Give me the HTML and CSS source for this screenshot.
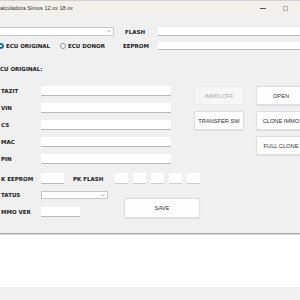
FILE: index.html
```html
<!DOCTYPE html>
<html lang="es">
<head>
    <meta charset="UTF-8">
    <title>Calculadora Simos 12.xx 18.xx</title>
    <link rel="stylesheet" href="styles.css">
</head>
<body>
<div class="titlebar">
    <span class="title">alculadora Simos 12.xx 18.xx</span>
    <div class="controls">
        <span class="min"></span>
        <span class="max"></span>
    </div>
</div>

<div class="form">
    <div class="row row-top">
        <div class="combo combo-main">
            <svg width="4" height="3" viewBox="0 0 4 3"><path d="M0.4 0.5 L2 2.1 L3.6 0.5" fill="none" stroke="#8a8a8a" stroke-width="0.6"/></svg>
        </div>
        <span class="label label-flash">FLASH</span>
        <div class="field field-wide"></div>
    </div>

    <div class="row row-radio">
        <div class="radio radio-original"><span class="dot checked"></span>ECU ORIGINAL</div>
        <div class="radio radio-donor"><span class="dot"></span>ECU DONOR</div>
        <span class="label label-eeprom">EEPROM</span>
        <div class="field field-wide"></div>
    </div>

    <div class="label section-title">CU ORIGINAL:</div>

    <div class="main">
        <div class="fields">
            <div class="field-row"><span class="label">TAZIT</span><div class="field"></div></div>
            <div class="field-row"><span class="label">VIN</span><div class="field"></div></div>
            <div class="field-row"><span class="label">CS</span><div class="field"></div></div>
            <div class="field-row"><span class="label">MAC</span><div class="field"></div></div>
            <div class="field-row"><span class="label">PIN</span><div class="field"></div></div>
        </div>
        <div class="buttons">
            <button class="btn btn-disabled">IMMO-OFF</button>
            <button class="btn">OPEN</button>
            <button class="btn">TRANSFER SW</button>
            <button class="btn">CLONE IMMO</button>
            <button class="btn btn-full">FULL CLONE</button>
        </div>
    </div>

    <div class="pk-row">
        <span class="label label-pk">K EEPROM</span>
        <div class="field box-pk"></div>
        <span class="label label-pkflash">PK FLASH</span>
        <div class="cells">
            <div class="field cell"></div>
            <div class="field cell"></div>
            <div class="field cell"></div>
            <div class="field cell"></div>
            <div class="field cell"></div>
        </div>
    </div>

    <div class="lower">
        <div class="lower-fields">
            <div class="status-row">
                <span class="label label-pk">TATUS</span>
                <div class="combo combo-status">
                    <svg width="4" height="3" viewBox="0 0 4 3"><path d="M0.4 0.5 L2 2.1 L3.6 0.5" fill="none" stroke="#8a8a8a" stroke-width="0.6"/></svg>
                </div>
            </div>
            <div class="immo-row">
                <span class="label label-pk">MMO VER</span>
                <div class="field box-immo"></div>
            </div>
        </div>
        <button class="btn btn-save">SAVE</button>
    </div>

    <div class="log"></div>
</div>
</body>
</html>
```

FILE: styles.css
```css
* {
    box-sizing: border-box;
}

body {
    margin: 0;
    width: 300px;
    height: 300px;
    overflow: hidden;
    background-color: #f0f0f0;
    font-family: "DejaVu Sans", Verdana, sans-serif;
}

/* Barra de titulo */
.titlebar {
    height: 15px;
    background-color: #f3f0ec;
    border-top: 1px solid #d2d2d2;
    display: flex;
    align-items: center;
    font-family: "Liberation Sans", Arial, sans-serif;
    font-size: 5.6px;
    color: #333;
    white-space: nowrap;
}

.controls {
    margin-left: auto;
    display: flex;
    align-items: center;
}

.min {
    width: 6px;
    height: 1px;
    background: #555;
    margin-right: 17px;
}

.max {
    width: 5px;
    height: 5px;
    border: 1px solid #b8b8b8;
    margin-right: 12px;
}

/* Formulario */
.form {
    display: flex;
    flex-direction: column;
}

.row {
    display: flex;
    align-items: center;
}

.label {
    font-weight: bold;
    font-size: 5.5px;
    color: #1b1b1b;
    white-space: nowrap;
    flex-shrink: 0;
}

.field {
    background: #fff;
    border-bottom: 1px solid #b9b9b9;
}

.combo {
    background: #fff;
    border: 1px solid #c6c6c6;
    display: flex;
    align-items: center;
    justify-content: flex-end;
    padding-right: 2px;
    flex-shrink: 0;
}

.combo svg {
    display: block;
}

.row-top {
    margin-top: 12px;
    height: 9px;
}

.combo-main {
    width: 117px;
    height: 9px;
    margin-left: -3px;
}

.label-flash {
    margin-left: 11px;
    width: 33px;
}

.field-wide {
    flex: 1;
    height: 9px;
    margin-right: -6px;
}

.row-radio {
    margin-top: 6px;
    height: 8px;
}

.row-radio .field-wide {
    height: 8px;
}

.radio {
    display: flex;
    align-items: center;
    font-weight: bold;
    font-size: 5.5px;
    color: #1b1b1b;
    white-space: nowrap;
    flex-shrink: 0;
}

.radio-original {
    margin-left: -2px;
    width: 62px;
}

.radio-donor {
    width: 63px;
}

.dot {
    width: 6px;
    height: 6px;
    border-radius: 50%;
    border: 1px solid #8c8c8c;
    background: #fff;
    margin-right: 2px;
    flex-shrink: 0;
}

.dot.checked {
    border-color: #0067c0;
    background: radial-gradient(circle, #fff 0 0.9px, #0067c0 1.2px);
}

.label-eeprom {
    width: 35px;
}

.section-title {
    margin-top: 15px;
    height: 8px;
    line-height: 8px;
}

/* Campos y botones */
.main {
    display: flex;
    margin-top: 13px;
}

.fields {
    width: 171px;
    flex-shrink: 0;
    display: flex;
    flex-direction: column;
    gap: 7px;
}

.field-row {
    display: flex;
    align-items: center;
    height: 10px;
}

.field-row .label,
.label-pk {
    width: 41px;
    padding-left: 1px;
}

.field-row .field {
    flex: 1;
    height: 10px;
}

.buttons {
    margin-left: 23px;
    flex-shrink: 0;
    display: grid;
    grid-template-columns: 50px 50px;
    grid-auto-rows: 19px;
    column-gap: 12px;
    row-gap: 6px;
}

.btn {
    margin: 0;
    padding: 0;
    background: #fdfdfd;
    border: 1px solid #dedede;
    border-radius: 1px;
    box-shadow: 0 0.5px 1px rgba(0, 0, 0, 0.08);
    font-family: "Liberation Sans", Arial, sans-serif;
    font-size: 5.7px;
    color: #333;
    white-space: nowrap;
    display: flex;
    align-items: center;
    justify-content: center;
}

.btn-disabled {
    background: #f6f6f6;
    border-color: #ebebeb;
    box-shadow: none;
    color: #a9a9a9;
}

.btn-full {
    grid-column: 2;
}

/* PK */
.pk-row {
    display: flex;
    align-items: center;
    height: 11px;
    margin-top: 9px;
}

.box-pk {
    width: 23px;
    height: 11px;
}

.label-pkflash {
    margin-left: 9px;
    width: 42px;
}

.cells {
    display: flex;
    gap: 5px;
}

.cell {
    width: 13px;
    height: 11px;
    border-bottom-color: #d0d0d0;
}

/* Estado y guardar */
.lower {
    display: flex;
    margin-top: 7px;
}

.lower-fields {
    width: 108px;
    flex-shrink: 0;
    display: flex;
    flex-direction: column;
    gap: 8px;
}

.status-row,
.immo-row {
    display: flex;
    align-items: center;
}

.status-row {
    height: 8px;
}

.immo-row {
    height: 10px;
}

.combo-status {
    width: 67px;
    height: 8px;
}

.box-immo {
    width: 39px;
    height: 10px;
}

.btn-save {
    width: 76px;
    height: 20px;
    margin-left: 16px;
    margin-top: 7px;
}

.log {
    margin-top: 15px;
    height: 54px;
    background: #fff;
    border-top: 1px solid #a6a6a6;
    box-shadow: inset 0 1px 0 #dcdcdc;
}
```
